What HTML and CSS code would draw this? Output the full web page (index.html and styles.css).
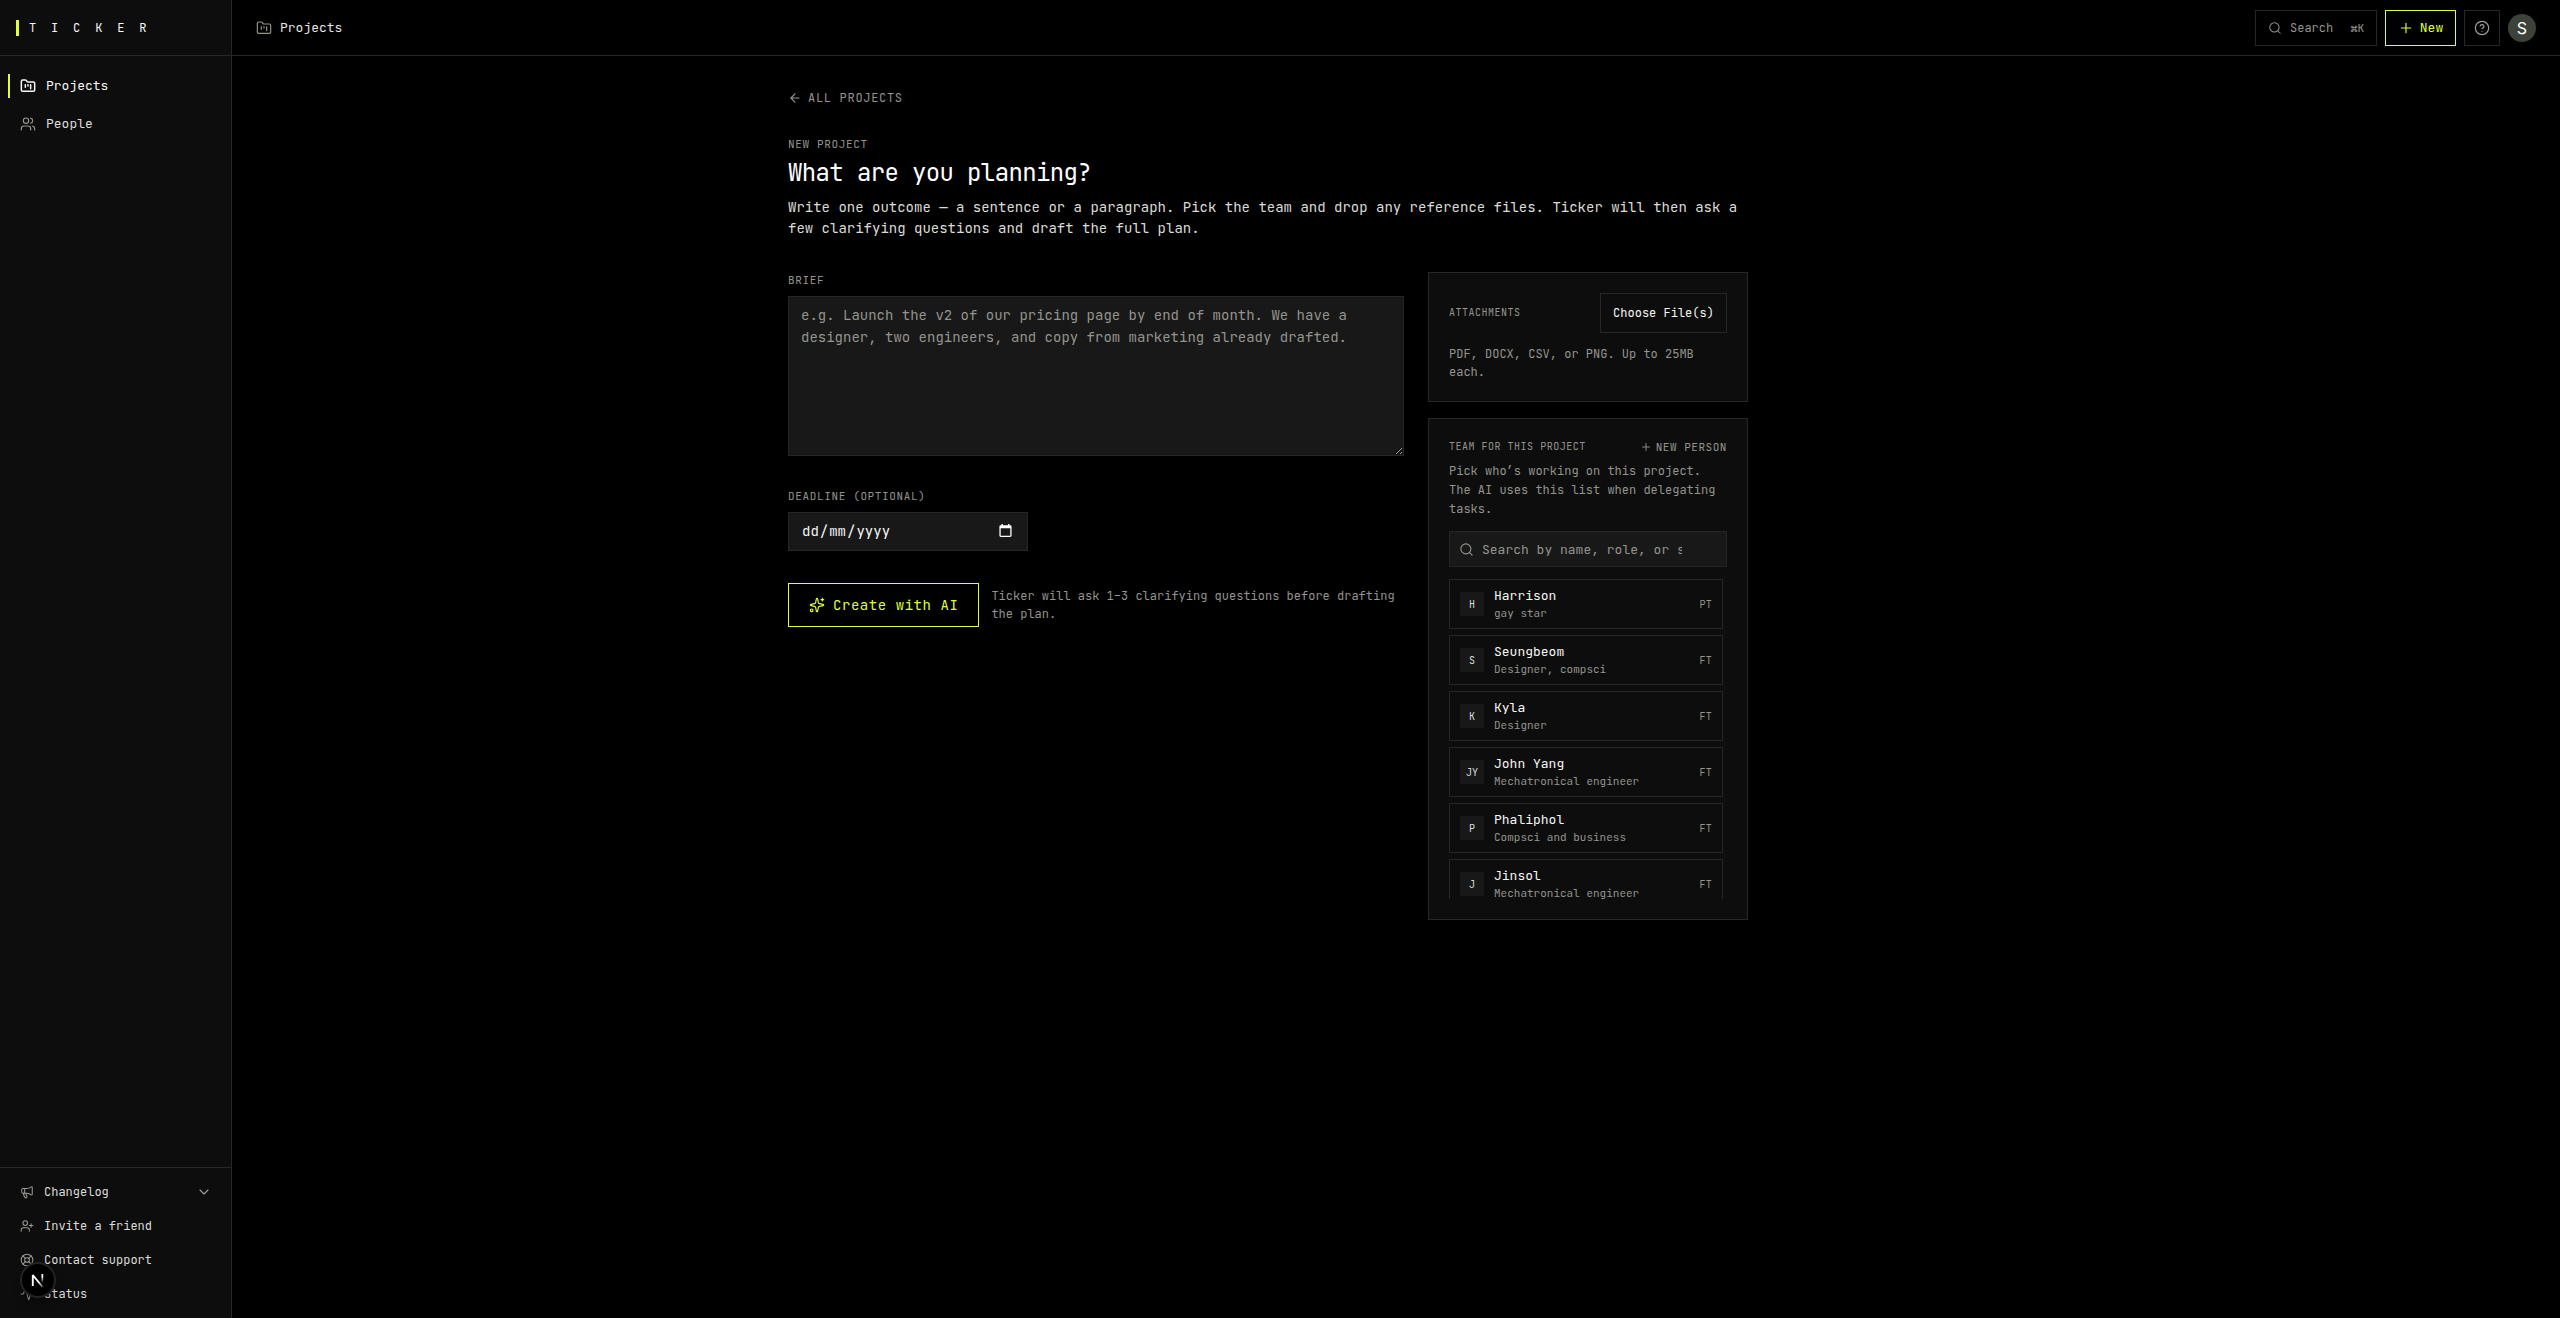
FILE: index.html
```html
<!DOCTYPE html>
<html lang="en">
<head>
<meta charset="utf-8">
<title>Ticker</title>
<link rel="stylesheet" href="styles.css">
</head>
<body>
<svg class="sprite" aria-hidden="true">
  <symbol id="i-folder" viewBox="0 0 24 24"><path d="M4 20h16a2 2 0 0 0 2-2V8a2 2 0 0 0-2-2h-7.93a2 2 0 0 1-1.66-.9l-.82-1.2A2 2 0 0 0 7.93 3H4a2 2 0 0 0-2 2v13c0 1.1.9 2 2 2Z"/><path d="M8 10v4M12 10v2M16 10v6"/></symbol>
  <symbol id="i-users" viewBox="0 0 24 24"><path d="M16 21v-2a4 4 0 0 0-4-4H6a4 4 0 0 0-4 4v2"/><circle cx="9" cy="7" r="4"/><path d="M22 21v-2a4 4 0 0 0-3-3.87M16 3.13a4 4 0 0 1 0 7.75"/></symbol>
  <symbol id="i-search" viewBox="0 0 24 24"><circle cx="11" cy="11" r="8"/><path d="m21 21-4.3-4.3"/></symbol>
  <symbol id="i-plus" viewBox="0 0 24 24"><path d="M5 12h14M12 5v14"/></symbol>
  <symbol id="i-help" viewBox="0 0 24 24"><circle cx="12" cy="12" r="10"/><path d="M9.09 9a3 3 0 0 1 5.83 1c0 2-3 3-3 3M12 17h.01"/></symbol>
  <symbol id="i-arrow" viewBox="0 0 24 24"><path d="m12 19-7-7 7-7M19 12H5"/></symbol>
  <symbol id="i-megaphone" viewBox="0 0 24 24"><path d="M11 6a13 13 0 0 0 8.4-2.8A1 1 0 0 1 21 4v12a1 1 0 0 1-1.6.8A13 13 0 0 0 11 14H5a2 2 0 0 1-2-2V8a2 2 0 0 1 2-2z"/><path d="M6 14a12 12 0 0 0 2.4 7.2 2 2 0 0 0 3.2-2.4A8 8 0 0 1 10 14M8 6v8"/></symbol>
  <symbol id="i-invite" viewBox="0 0 24 24"><path d="M16 21v-2a4 4 0 0 0-4-4H6a4 4 0 0 0-4 4v2"/><circle cx="9" cy="7" r="4"/><path d="M19 8v6M22 11h-6"/></symbol>
  <symbol id="i-buoy" viewBox="0 0 24 24"><circle cx="12" cy="12" r="10"/><path d="m4.93 4.93 4.24 4.24M14.83 9.17l4.24-4.24M14.83 14.83l4.24 4.24M9.17 14.83l-4.24 4.24"/><circle cx="12" cy="12" r="4"/></symbol>
  <symbol id="i-activity" viewBox="0 0 24 24"><path d="M22 12h-2.48a2 2 0 0 0-1.93 1.46l-2.35 8.36a.25.25 0 0 1-.48 0L9.24 2.18a.25.25 0 0 0-.48 0l-2.35 8.36A2 2 0 0 1 4.49 12H2"/></symbol>
  <symbol id="i-chevron" viewBox="0 0 24 24"><path d="m6 9 6 6 6-6"/></symbol>
  <symbol id="i-sparkles" viewBox="0 0 24 24"><path d="M11.017 2.814a1 1 0 0 1 1.966 0l1.051 5.558a2 2 0 0 0 1.594 1.594l5.558 1.051a1 1 0 0 1 0 1.966l-5.558 1.051a2 2 0 0 0-1.594 1.594l-1.051 5.558a1 1 0 0 1-1.966 0l-1.051-5.558a2 2 0 0 0-1.594-1.594l-5.558-1.051a1 1 0 0 1 0-1.966l5.558-1.051a2 2 0 0 0 1.594-1.594z"/><path d="M20 2v4M22 4h-4"/><circle cx="4" cy="20" r="2"/></symbol>
</svg>
<div class="app">
  <aside class="sidebar">
    <div class="brand"><span class="brand-bar"></span><span class="brand-name">TICKER</span></div>
    <nav class="nav">
      <a class="nav-item active"><svg class="icon s16"><use href="#i-folder"/></svg><span>Projects</span></a>
      <a class="nav-item"><svg class="icon s16"><use href="#i-users"/></svg><span>People</span></a>
    </nav>
    <div class="side-footer">
      <a class="foot-item"><svg class="icon s14"><use href="#i-megaphone"/></svg>Changelog<svg class="icon s16 chevron"><use href="#i-chevron"/></svg></a>
      <a class="foot-item"><svg class="icon s14"><use href="#i-invite"/></svg>Invite a friend</a>
      <a class="foot-item"><svg class="icon s14"><use href="#i-buoy"/></svg>Contact support</a>
      <a class="foot-item"><svg class="icon s14"><use href="#i-activity"/></svg>Status</a>
    </div>
  </aside>
  <div class="page">
    <header class="topbar">
      <div class="crumb"><svg class="icon s16"><use href="#i-folder"/></svg>Projects</div>
      <div class="actions">
        <button class="btn search-btn"><svg class="icon s14"><use href="#i-search"/></svg>Search<kbd>⌘K</kbd></button>
        <button class="btn new-btn"><svg class="icon s16"><use href="#i-plus"/></svg>New</button>
        <button class="btn help-btn"><svg class="icon s16"><use href="#i-help"/></svg></button>
        <span class="user">S</span>
      </div>
    </header>
    <main class="content">
      <a class="back"><svg class="icon s14"><use href="#i-arrow"/></svg>ALL PROJECTS</a>
      <div class="label">NEW PROJECT</div>
      <h1>What are you planning?</h1>
      <p class="lead">Write one outcome — a sentence or a paragraph. Pick the team and drop any reference files. Ticker will then ask a few clarifying questions and draft the full plan.</p>
      <div class="columns">
        <form class="form">
          <label class="label" for="brief">BRIEF</label>
          <textarea id="brief" placeholder="e.g. Launch the v2 of our pricing page by end of month. We have a designer, two engineers, and copy from marketing already drafted."></textarea>
          <div class="label">DEADLINE (OPTIONAL)</div>
          <div class="date"><span><i>dd</i>/<i>mm</i>/<i>yyyy</i></span>
            <svg class="calendar" viewBox="0 0 13 14"><path d="M2.5 0h1.4v1.3h5.2V0h1.4v1.3h.9A1.4 1.4 0 0 1 12.6 2.7v8.9A1.4 1.4 0 0 1 11.2 13H1.8A1.4 1.4 0 0 1 .4 11.6V2.7A1.4 1.4 0 0 1 1.8 1.3h.7zM1.7 4.3v7.4h9.6V4.3z" fill-rule="evenodd"/></svg>
          </div>
          <div class="submit">
            <button class="btn create-btn" type="button"><svg class="icon s16"><use href="#i-sparkles"/></svg>Create with AI</button>
            <p class="hint">Ticker will ask 1–3 clarifying questions before drafting the plan.</p>
          </div>
        </form>
        <div class="side">
          <section class="card">
            <div class="card-head"><span class="label small">ATTACHMENTS</span><button class="btn file-btn">Choose File(s)</button></div>
            <p class="hint files">PDF, DOCX, CSV, or PNG. Up to 25MB each.</p>
          </section>
          <section class="card team">
            <div class="card-head"><span class="label small">TEAM FOR THIS PROJECT</span><a class="label add"><svg class="icon s12"><use href="#i-plus"/></svg>NEW PERSON</a></div>
            <p class="hint pick">Pick who’s working on this project. The AI uses this list when delegating tasks.</p>
            <div class="find"><svg class="icon s15"><use href="#i-search"/></svg><span>Search by name, role, or skill…</span></div>
            <div class="people">
              <div class="person"><span class="tile">H</span><div class="who"><b>Harrison</b><small>gay star</small></div><span class="type">PT</span></div>
              <div class="person"><span class="tile">S</span><div class="who"><b>Seungbeom</b><small>Designer, compsci</small></div><span class="type">FT</span></div>
              <div class="person"><span class="tile">K</span><div class="who"><b>Kyla</b><small>Designer</small></div><span class="type">FT</span></div>
              <div class="person"><span class="tile">JY</span><div class="who"><b>John Yang</b><small>Mechatronical engineer</small></div><span class="type">FT</span></div>
              <div class="person"><span class="tile">P</span><div class="who"><b>Phaliphol</b><small>Compsci and business</small></div><span class="type">FT</span></div>
              <div class="person"><span class="tile">J</span><div class="who"><b>Jinsol</b><small>Mechatronical engineer</small></div><span class="type">FT</span></div>
            </div>
          </section>
        </div>
      </div>
    </main>
  </div>
</div>
<div class="dev-badge">
  <svg viewBox="0 0 36 36"><defs><linearGradient id="fade" x1="0" y1="0" x2="0" y2="1"><stop offset="0.3" stop-color="#fff"/><stop offset="1" stop-color="#fff" stop-opacity="0"/></linearGradient><linearGradient id="fade-d" x1="0" y1="0" x2="1" y2="1"><stop offset="0.6" stop-color="#fff"/><stop offset="1" stop-color="#fff" stop-opacity="0.3"/></linearGradient></defs><path d="M12.8 24V13l9.8 12" fill="none" stroke="url(#fade-d)" stroke-width="1.9" stroke-linejoin="bevel"/><rect x="21.5" y="12" width="1.7" height="9" fill="url(#fade)"/></svg>
</div>
</body>
</html>
```
FILE: styles.css
```css
:root {
  --bg: #000;
  --panel: #0d0d0d;
  --field: #181818;
  --line: #262626;
  --accent: #dfff3d;
  --text: #f7f7f5;
  --soft: #dcdcd8;
  --muted: #94948e;
  color-scheme: dark;
}
* { box-sizing: border-box; }
body, h1, p { margin: 0; }
body, button, textarea {
  font-family: "JetBrains Mono", "DejaVu Sans Mono", monospace;
}
body { background: var(--bg); color: var(--text); font-size: 13px; overflow: hidden; }
.sprite { position: absolute; width: 0; height: 0; }
.icon { flex: none; fill: none; stroke: currentColor; stroke-width: 1.75; stroke-linecap: round; stroke-linejoin: round; }
.s12 { width: 12px; height: 12px; }
.s14 { width: 14px; height: 14px; }
.s15 { width: 15px; height: 15px; }
.s16 { width: 16px; height: 16px; }

.app { display: flex; height: 1318px; }
.sidebar { width: 232px; flex: none; display: flex; flex-direction: column; background: var(--panel); border-right: 1px solid var(--line); }
.brand { height: 56px; display: flex; align-items: center; gap: 10px; padding-left: 16px; border-bottom: 1px solid var(--line); }
.brand-bar { width: 3px; height: 16px; background: var(--accent); }
.brand-name { font-size: 12px; letter-spacing: 14.86px; }
.nav { flex: 1; display: flex; flex-direction: column; gap: 2px; padding: 12px 8px; }
.nav-item { height: 36px; display: flex; align-items: center; gap: 10px; padding-left: 12px; color: var(--soft); }
.nav-item span { padding-bottom: 2px; }
.nav-item .icon { color: var(--muted); }
.nav-item.active, .nav-item.active .icon { color: var(--text); }
.nav-item.active .icon { stroke-width: 2.25; }
.nav-item.active { background: linear-gradient(var(--accent), var(--accent)) 0 50% / 2px 24px no-repeat; }
.side-footer { display: flex; flex-direction: column; gap: 2px; padding: 8px; border-top: 1px solid var(--line); }
.foot-item { height: 32px; display: flex; align-items: center; gap: 10px; padding: 0 11px 0 12px; font-size: 12px; color: var(--soft); }
.foot-item .icon { color: #9a9a94; }
.foot-item .chevron { margin-left: auto; }

.page { flex: 1; }
.topbar { height: 56px; display: flex; align-items: center; justify-content: space-between; padding: 0 24px; border-bottom: 1px solid var(--line); }
.crumb { display: flex; align-items: center; gap: 8px; color: #e4e4e0; }
.crumb .icon { color: var(--muted); }
.actions { display: flex; align-items: center; gap: 8px; }
.btn { height: 36px; display: flex; align-items: center; justify-content: center; padding: 0; background: none; border: 1px solid var(--line); color: var(--muted); }
.search-btn { width: 122px; justify-content: flex-start; gap: 8px; padding: 0 12px; font-size: 12px; }
.search-btn kbd { margin-left: auto; font: inherit; font-size: 11px; }
.new-btn { width: 71px; gap: 6px; border-color: var(--accent); color: var(--accent); font-size: 13px; }
.help-btn { width: 36px; color: #a0a09a; }
.user { width: 28px; height: 28px; display: flex; align-items: center; justify-content: center; border-radius: 50%; background: #3b4237; font: 16px Inter, sans-serif; color: #fff; }

.content { width: 960px; margin-left: 556px; padding-top: 32px; }
.back { height: 20px; display: flex; align-items: center; gap: 6px; margin-bottom: 28px; font-size: 12px; letter-spacing: 0.058em; color: var(--muted); }
.back .icon { stroke-width: 2; }
.label { display: block; font-size: 11px; line-height: 16px; letter-spacing: 0.058em; color: var(--muted); }
h1 { margin-top: 4px; font-size: 24px; line-height: 33px; font-weight: 400; letter-spacing: -0.026em; color: #fff; }
.lead { margin-top: 4px; padding-top: 4px; font-size: 14px; line-height: 21px; color: var(--soft); }
.columns { display: grid; grid-template-columns: 616px 320px; gap: 24px; align-items: start; margin-top: 33px; }
.form { display: flex; flex-direction: column; gap: 8px; }
textarea { display: block; height: 160px; margin: 0 0 24px; padding: 7px 12px; background: var(--field); border: 1px solid var(--line); border-radius: 0; font-size: 14px; line-height: 22px; resize: vertical; }
textarea::placeholder { color: var(--muted); }
.date { width: 240px; height: 39px; display: flex; align-items: center; justify-content: space-between; padding: 0 15px 1px 12px; background: var(--field); border: 1px solid var(--line); font-size: 14px; }
.date i { font-style: normal; padding: 0 1px; }
.calendar { width: 13px; height: 14px; fill: #fff; }
.submit { display: flex; align-items: center; gap: 12px; margin-top: 24px; }
.create-btn { width: 191.4px; height: 44px; flex: none; gap: 8px; border-color: var(--accent); color: var(--accent); font-size: 14px; letter-spacing: 0.04em; }
.hint { font-size: 12px; line-height: 18px; color: var(--muted); }

.side { display: flex; flex-direction: column; gap: 16px; }
.card { padding: 20px; background: var(--panel); border: 1px solid var(--line); }
.card-head { display: flex; align-items: center; justify-content: space-between; }
.small { font-size: 10px; letter-spacing: 0.051em; }
.file-btn { width: 127px; height: 40px; font-size: 12px; color: var(--text); }
.files { margin-top: 12px; }
.add { display: flex; align-items: center; gap: 4px; letter-spacing: 0.048em; }
.card.team { height: 502px; }
.pick { margin-top: 7px; line-height: 19px; }
.find { height: 36px; display: flex; align-items: center; gap: 8px; margin-top: 12px; padding-left: 9px; background: var(--field); border: 1px solid var(--line); color: var(--muted); }
.find span { width: 200px; overflow: hidden; white-space: nowrap; }
.people { height: 320px; display: flex; flex-direction: column; gap: 6px; margin-top: 12px; padding-right: 4px; overflow: hidden; }
.person { height: 50px; flex: none; display: flex; align-items: center; gap: 10px; padding: 0 10px; border: 1px solid var(--line); }
.tile { width: 24px; height: 24px; display: flex; align-items: center; justify-content: center; background: var(--field); font-size: 10px; color: var(--soft); }
.who { flex: 1; display: flex; flex-direction: column; }
.who b { font-weight: 400; font-size: 13px; line-height: 19px; }
.who small { font-size: 11px; line-height: 17px; color: var(--muted); }
.type { font-size: 10px; letter-spacing: 0.03em; color: var(--muted); }

.dev-badge { position: absolute; left: 20px; top: 1262px; width: 36px; height: 36px; border-radius: 50%; background: #000; border: 2px solid #232323; box-shadow: 0 8px 12px -4px rgba(0, 0, 0, 0.4); }
.dev-badge svg { display: block; width: 36px; height: 36px; margin: -2px; }
```
